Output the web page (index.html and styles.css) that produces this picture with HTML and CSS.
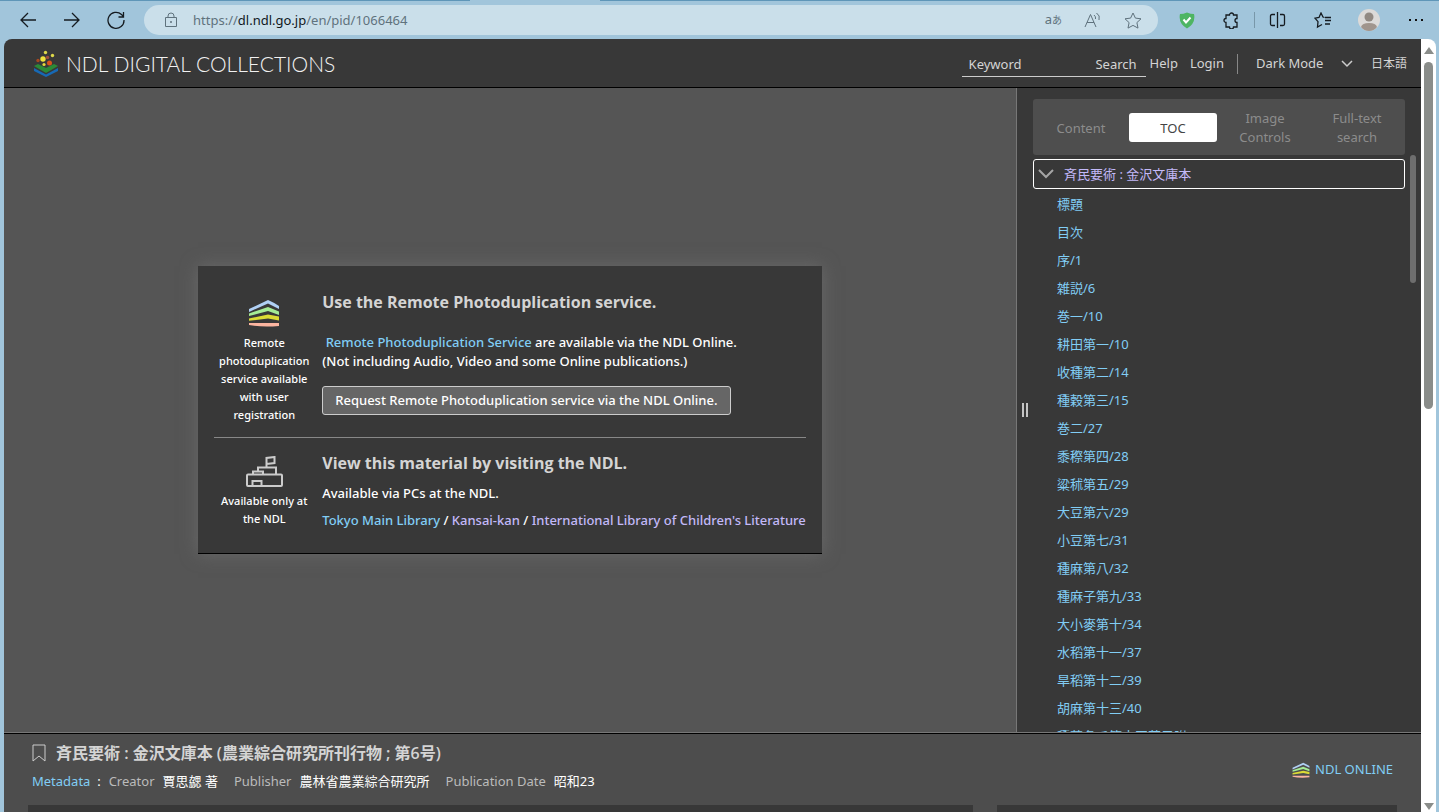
FILE: index.html
```
<!DOCTYPE html>
<html lang="en">
<head>
    <meta charset="utf-8" />
    <title>斉民要術 : 金沢文庫本 - NDL Digital Collections</title>
    <meta name="viewport" content="width=device-width, initial-scale=1.0" />
    <link rel="stylesheet" href="styles.css">
</head>

<body>
<svg class="defs" aria-hidden="true">
    <symbol id="layers" viewBox="0 0 32 28">
        <path d="M1 13V10L20 1Q27 4 31 7V10L20 4.500Z" fill="#b0d0f5" />
        <path d="M1 17V14.500L20 8 31 12.500V16L20 12Z" fill="#a5eb95" />
        <path d="M1 21.800V19.500L20 15.500 31 17.500V21.500L20 19.500Z" fill="#dbdb35" />
        <path d="M1 24H31V27Q14 28.500 1 26Z" fill="#fcb5a0" />
    </symbol>
</svg>

<div class="browser">
    <button class="tool" aria-label="Back"><svg width="18" height="16" viewBox="0 0 18 16"><path d="M17 8H2M9 1L2 8l7 7" /></svg></button>
    <button class="tool" aria-label="Forward"><svg width="18" height="16" viewBox="0 0 18 16"><path d="M1 8h15M9 1l7 7-7 7" /></svg></button>
    <button class="tool" aria-label="Reload"><svg width="18" height="18" viewBox="0 0 18 18"><path d="M17 9A8 8 0 1 1 14.500 3.500L16 5M16.500 1v5h-5" /></svg></button>
    <div class="address">
        <svg class="lock" width="14" height="16" viewBox="0 0 14 16"><path d="M1.500 5.500h11v9h-11zM4 5.500V4a3 3 0 0 1 6 0v1.500" /><circle cx="7" cy="10" r="1" fill="#5f727d" stroke="none" /></svg>
        <span class="url">https://<b>dl.ndl.go.jp</b>/en/pid/1066464</span>
        <span class="glyph">a<small>あ</small></span>
        <svg width="18" height="16" viewBox="0 0 18 16"><path d="M1 15L6.500 2.500 12 15M3 10.500h7M10 3q2 1.500 1.500 4M12.500 1q4 2.500 2.500 7" /></svg>
        <svg width="18" height="17" viewBox="0 0 18 17"><path d="M9 1l2.400 5.100 5.600.7-4.100 3.800 1.100 5.500L9 13.400l-5 2.700 1.100-5.500L1 6.800l5.600-.7z" /></svg>
    </div>
    <div class="extras">
        <button class="tool" aria-label="Protection"><svg width="16" height="17" viewBox="0 0 16 17"><path d="M1 2q3.500 0 7-1.500Q11.500 2 15 2q2 9-7 14.500Q-1 11 1 2z" fill="#4eb563" stroke="none" /><path d="M4.500 7.500L7 10.500l4.500-5" stroke="#fff" stroke-width="2" /></svg></button>
        <button class="tool" aria-label="Extensions"><svg width="17" height="17" viewBox="0 0 17 17"><path d="M3 3h3.500a2 2 0 1 1 4 0H14v3.500a2 2 0 1 0 0 4V15H10.500a2 2 0 1 1-4 0H3v-4.500a2 2 0 1 1 0-4z" /></svg></button>
        <span class="bar"></span>
        <button class="tool" aria-label="Split screen"><svg width="17" height="16" viewBox="0 0 17 16"><path d="M6 2.500H3q-1.500 0-1.500 1.500v8q0 1.500 1.500 1.500h3M11 2.500h3q1.500 0 1.500 1.500v8q0 1.500-1.500 1.500h-3M8.500 0v16" /></svg></button>
        <button class="tool" aria-label="Favorites"><svg width="18" height="17" viewBox="0 0 18 17"><path d="M10.500 5.500L9 5 7 1 5 5.500l-4 .7 3 3.500L3.500 15 8 12.500M11 8.500h6M11 5.500h6M11 12h5" /></svg></button>
        <button class="tool profile" aria-label="Profile"><svg width="22" height="22" viewBox="0 0 22 22"><circle cx="11" cy="11" r="11" fill="#dcdad8" stroke="none" /><circle cx="11" cy="8" r="4.500" fill="#918982" stroke="none" /><path d="M3 18q1-4 8-4t8 4q-3 4-8 4t-8-4z" fill="#a0958d" stroke="none" /></svg></button>
        <button class="tool" aria-label="Settings"><svg width="16" height="4" viewBox="0 0 16 4"><path d="M1 1h2v2H1zM7 1h2v2H7zM13 1h2v2h-2z" fill="#111" stroke="none" /></svg></button>
    </div>
</div>

<div class="window">
    <div class="page">
        <header class="header">
            <a class="logo" href="#">
                <svg width="26" height="27" viewBox="0 0 26 27">
                    <path d="M1 18l12 6.500L25 18v3l-12 6L1 21z" fill="#1769b5" />
                    <path d="M1 16l4-2 8 4 8-4 4 2-12 7z" fill="#2b8a36" />
                    <circle cx="12.500" cy="2.500" r="1.700" fill="#ddd84a" />
                    <circle cx="19.500" cy="5.500" r="1.700" fill="#ddd84a" />
                    <circle cx="10" cy="9" r="2.700" fill="#efe23b" />
                    <circle cx="11" cy="14.500" r="1.600" fill="#e5d93b" />
                    <circle cx="5" cy="10.500" r="1.700" fill="#a5471f" />
                    <circle cx="14.500" cy="7.500" r="1.800" fill="#9b4f3d" />
                    <circle cx="16.500" cy="13" r="2.500" fill="#d9531c" />
                </svg>
                <span>NDL DIGITAL COLLECTIONS</span>
            </a>
            <form class="search">
                <input type="text" placeholder="Keyword" aria-label="Keyword" />
                <button type="button">Search</button>
            </form>
            <a class="nav" href="#">Help</a>
            <a class="nav login" href="#">Login</a>
            <div class="mode">
                <select aria-label="Display mode">
                    <option>Dark Mode</option>
                    <option>Light Mode</option>
                </select>
                <svg width="12" height="8" viewBox="0 0 12 8"><path d="M1 1l5 5 5-5" /></svg>
            </div>
            <a class="lang" href="#" lang="ja">日本語</a>
        </header>

        <div class="main">
            <main class="viewer">
                <div class="dialog">
                    <section class="service">
                        <div class="kind">
                            <svg width="32" height="28"><use href="#layers" /></svg>
                            <p>Remote photoduplication service available with user registration</p>
                        </div>
                        <div class="about">
                            <h2>Use the Remote Photoduplication service.</h2>
                            <p class="note">&nbsp;<a href="#">Remote Photoduplication Service</a> are available via the NDL Online.<br />(Not including Audio, Video and some Online publications.)</p>
                            <button class="request">Request Remote Photoduplication service via the NDL Online.</button>
                        </div>
                    </section>
                    <section class="service visit">
                        <div class="kind">
                            <svg width="38" height="32" viewBox="0 0 38 32"><path d="M2 19.500q0-1 1-1h33q1 0 1 1V29q0 1-1 1H3q-1 0-1-1zM7.500 30v-5h9v5M8 18.500v-3h10v3M13 15.500v-4h18v7M21.500 11.500V2l8-1v6l-8 1" /></svg>
                            <p>Available only at the NDL</p>
                        </div>
                        <div class="about">
                            <h2>View this material by visiting the NDL.</h2>
                            <p>Available via PCs at the NDL.</p>
                            <p class="places"><a href="#">Tokyo Main Library</a> / <a class="seen" href="#">Kansai-kan</a> / <a class="seen" href="#">International Library of Children's Literature</a></p>
                        </div>
                    </section>
                </div>
            </main>

            <aside class="side">
                <div class="grip"></div>
                <div class="tabs">
                    <button>Content</button>
                    <button class="active">TOC</button>
                    <button>Image Controls</button>
                    <button>Full-text search</button>
                </div>
                <div class="toc" lang="ja">
                    <a class="root" href="#"><svg width="16" height="10" viewBox="0 0 16 10"><path d="M1 1l7 7 7-7" /></svg>斉民要術 : 金沢文庫本</a>
                    <ul>
                        <li><a href="#">標題</a></li>
                        <li><a href="#">目次</a></li>
                        <li><a href="#">序/1</a></li>
                        <li><a href="#">雑説/6</a></li>
                        <li><a href="#">巻一/10</a></li>
                        <li><a href="#">耕田第一/10</a></li>
                        <li><a href="#">收種第二/14</a></li>
                        <li><a href="#">種穀第三/15</a></li>
                        <li><a href="#">巻二/27</a></li>
                        <li><a href="#">黍穄第四/28</a></li>
                        <li><a href="#">粱秫第五/29</a></li>
                        <li><a href="#">大豆第六/29</a></li>
                        <li><a href="#">小豆第七/31</a></li>
                        <li><a href="#">種麻第八/32</a></li>
                        <li><a href="#">種麻子第九/33</a></li>
                        <li><a href="#">大小麥第十/34</a></li>
                        <li><a href="#">水稻第十一/37</a></li>
                        <li><a href="#">旱稻第十二/39</a></li>
                        <li><a href="#">胡麻第十三/40</a></li>
                        <li><a href="#">種苽冬瓜第十四茄子附/41</a></li>
                    </ul>
                </div>
                <div class="thumb"></div>
            </aside>
        </div>

        <footer class="item">
            <div class="summary">
                <div>
                    <h1 lang="ja"><svg width="14" height="18" viewBox="0 0 14 18"><path d="M1 1h12v16l-6-5-6 5z" /></svg>斉民要術 : 金沢文庫本 (農業綜合研究所刊行物 ; 第6号)</h1>
                    <dl>
                        <dt class="meta"><a href="#">Metadata</a>&nbsp; :</dt>
                        <dt>Creator</dt><dd lang="ja">賈思勰 著</dd>
                        <dt>Publisher</dt><dd lang="ja">農林省農業綜合研究所</dd>
                        <dt>Publication Date</dt><dd lang="ja">昭和23</dd>
                    </dl>
                </div>
                <a class="online" href="#"><svg width="18" height="16"><use href="#layers" /></svg>NDL ONLINE</a>
            </div>
            <div class="panels">
                <div></div>
                <div></div>
            </div>
        </footer>
    </div>
    <div class="scrollbar">
        <span class="up"></span>
        <span class="handle"></span>
        <span class="down"></span>
    </div>
</div>
</body>
</html>
```

FILE: styles.css
```
* {
    box-sizing: border-box;
}
body {
    display: flex;
    flex-direction: column;
    height: 100vh;
    margin: 0;
    overflow: hidden;
    background: #a1c5db;
    color: #fff;
    font-family: "Noto Sans", "Noto Sans CJK JP", sans-serif;
    font-size: 13px;
    line-height: 19px;
}
a {
    color: #81cdf5;
    text-decoration: none;
}
a.seen, a.root {
    color: #c3b9f8;
}
h1, h2, p, ul, dl, dd {
    margin: 0;
    padding: 0;
}
button, input, select {
    font: inherit;
    color: inherit;
    background: none;
    border: 0;
    padding: 0;
}
svg {
    flex: none;
    fill: none;
    stroke: #ccc;
}
.defs {
    position: absolute;
    width: 0;
    height: 0;
}
use {
    stroke: none;
}

/* browser bar */
.browser {
    position: relative;
    flex: none;
    display: flex;
    align-items: center;
    height: 39px;
    padding: 0 1px 0 6px;
    border-top: 1px solid #5f96b8;
}
/* bottom edge of the open tab */
.browser::before {
    content: "";
    position: absolute;
    top: -1px;
    left: 470px;
    width: 130px;
    height: 1px;
    background: #a1c5db;
}
.tool {
    display: flex;
    align-items: center;
    justify-content: center;
    width: 44px;
    height: 32px;
}
.tool svg {
    stroke: #151b20;
    stroke-width: 1.3;
}
.address {
    flex: 1;
    display: flex;
    align-items: center;
    gap: 22px;
    height: 30px;
    margin-left: 6px;
    padding: 0 16px 0 20px;
    border-radius: 15px;
    background: #cadfea;
    color: #5f727d;
}
.address svg {
    stroke: #5f727d;
}
.address .lock {
    margin-right: -7px;
}
.url {
    flex: 1;
}
.url b {
    color: #10181d;
    font-weight: 400;
}
.glyph small {
    font-size: 10px;
}
.extras {
    display: flex;
    align-items: center;
    margin-left: 6px;
}
.extras .tool {
    width: 45px;
}
.extras .profile {
    width: 48px;
}
.bar {
    width: 1px;
    height: 16px;
    background: #7897a9;
}

/* page frame */
.window {
    flex: 1;
    display: flex;
    min-height: 0;
    padding: 0 3px 0 4px;
}
.page {
    flex: 1;
    display: flex;
    flex-direction: column;
    min-width: 0;
    border-top-left-radius: 8px;
    background: #383838;
    overflow: hidden;
}
.scrollbar {
    display: flex;
    flex-direction: column;
    align-items: center;
    width: 15px;
    padding: 8px 0 2px;
    border-top-right-radius: 8px;
    background: #fff;
}
.up, .down {
    border: 5px solid transparent;
    border-top: 0;
    border-bottom: 7px solid #8a8d8a;
}
.down {
    margin-top: auto;
    border-top: 7px solid #8a8d8a;
    border-bottom: 0;
}
.handle {
    width: 9px;
    height: 347px;
    margin-top: 8px;
    border-radius: 5px;
    background: #8a8d8a;
}

/* header */
.header {
    flex: none;
    display: flex;
    align-items: center;
    height: 49px;
    padding: 1px 14px 0 29px;
    border-bottom: 1px solid #000;
    color: #d4d4d4;
}
.logo {
    display: flex;
    align-items: center;
    gap: 7px;
    margin-right: auto;
    color: #f2f2f2;
    font-family: Lato, sans-serif;
    font-size: 21px;
    font-weight: 300;
}
.logo svg {
    stroke: none;
}
.search {
    display: flex;
    width: 184px;
    height: 26px;
    padding: 2px 9px 0 7px;
    border-bottom: 1px solid #ccc;
}
.search input {
    flex: 1;
    min-width: 0;
    outline: 0;
}
.search input::placeholder {
    color: #d4d4d4;
}
.nav {
    margin-left: 4px;
    color: #d4d4d4;
}
.login {
    margin-left: 12px;
}
.mode {
    display: flex;
    align-items: center;
    height: 20px;
    margin-left: 13px;
    padding-left: 18px;
    border-left: 1px solid #888;
}
.mode select {
    width: 85px;
    appearance: none;
}
.mode svg {
    stroke-width: 1.5;
}
.lang {
    margin-left: 18px;
    color: #d4d4d4;
    font-size: 12px;
}

/* viewer */
.main {
    flex: 1;
    display: flex;
    min-height: 0;
}
.viewer {
    flex: 1;
    display: flex;
    align-items: center;
    justify-content: center;
    background: #555;
}
.dialog {
    padding: 26px 16px 23px;
    border-bottom: 1px solid #000;
    background: #383838;
    box-shadow: 0 0 16px #6a6a6a;
    font-weight: 500;
}
.service {
    display: flex;
    gap: 8px;
    padding-bottom: 13px;
}
.visit {
    padding: 15px 0 0;
    border-top: 1px solid #888;
}
.kind {
    width: 100px;
    padding-top: 7px;
    font-size: 11px;
    line-height: 18px;
    text-align: center;
}
.kind svg {
    display: block;
    margin: 0 auto 7px;
}
.visit .kind {
    padding-top: 3px;
}
.visit .kind svg {
    margin-bottom: 4px;
    stroke-width: 2;
}
h2 {
    color: #d4d4d4;
    font-family: "Open Sans", sans-serif;
    font-size: 16px;
    line-height: 20px;
}
.note {
    margin: 21px 0 15px;
}
.request {
    height: 29px;
    padding: 0 12px;
    border: 1px solid #ccc;
    border-radius: 3px;
    background: #666;
}
.visit h2 {
    margin-bottom: 11px;
}
.places {
    margin-top: 8px;
}

/* side panel */
.side {
    position: relative;
    display: flex;
    flex-direction: column;
    width: 405px;
    padding: 11px 16px 0;
    border-left: 1px solid #777;
}
.grip {
    position: absolute;
    top: 315px;
    left: 5px;
    width: 6px;
    height: 14px;
    border: solid #c5c5c5;
    border-width: 0 2px;
}
.tabs {
    flex: none;
    display: grid;
    grid-template-columns: repeat(4, 1fr);
    align-items: center;
    gap: 4px;
    height: 56px;
    padding: 0 4px;
    border-radius: 3px;
    background: #4e4e4e;
    color: #8c8c8c;
}
.tabs button {
    height: 40px;
    padding: 2px 12px 0;
}
.tabs .active {
    height: 29px;
    border-radius: 3px;
    background: #fff;
    color: #444;
}
.toc {
    flex: 1;
    min-height: 0;
    margin-top: 4px;
    overflow: hidden;
}
.root {
    display: flex;
    align-items: center;
    gap: 10px;
    height: 30px;
    padding-left: 4px;
    border: 1px solid #fff;
    border-radius: 3px;
}
.root svg {
    stroke: #a5a5a5;
    stroke-width: 2;
}
.toc ul {
    padding: 1px 0 0 24px;
    list-style: none;
}
.toc li {
    height: 28px;
    line-height: 28px;
}
.thumb {
    position: absolute;
    top: 67px;
    right: 5px;
    width: 6px;
    height: 128px;
    border-radius: 3px;
    background: #6e6e6e;
}

/* item summary */
.item {
    flex: none;
    height: 80px;
    padding: 0 24px;
    overflow: hidden;
    border-top: 1px solid #777;
    background: #4d4d4d;
    box-shadow: inset 0 1px #000;
}
.summary {
    display: flex;
    align-items: center;
    justify-content: space-between;
    height: 72px;
    padding: 0 4px 4px;
}
h1 {
    display: flex;
    align-items: center;
    gap: 10px;
    color: #d4d4d4;
    font-family: "Open Sans", "Noto Sans CJK JP", sans-serif;
    font-size: 16px;
    font-weight: 600;
    line-height: 20px;
}
.item dl {
    display: flex;
    margin-top: 9px;
}
dt {
    margin-right: 8px;
    color: #bbb;
}
.meta {
    color: #fff;
}
.item dd {
    margin-right: 16px;
}
.online {
    display: flex;
    align-items: center;
    gap: 5px;
    margin-top: 5px;
}
.panels {
    display: grid;
    grid-template-columns: 945fr 400fr;
    gap: 24px;
}
.panels div {
    height: 20px;
    background: #383838;
}
```
